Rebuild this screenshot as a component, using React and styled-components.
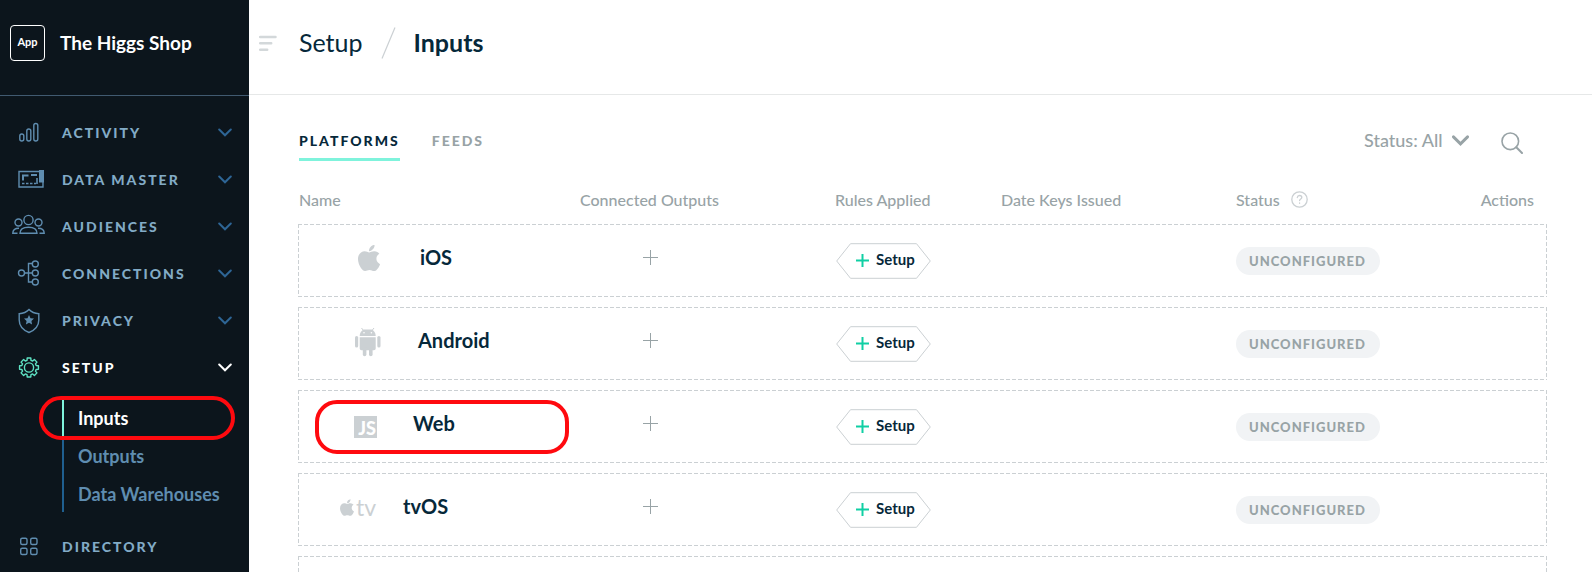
import React from "react";
import styled, { createGlobalStyle, css } from "styled-components";
import { FaApple } from "react-icons/fa";

const c = {
  ink: "#0c151c",
  navy: "#06283a",
  steel: "#82abc6",
  steelDim: "#5f8db0",
  blue: "#2e6595",
  line: "#1f5f8f",
  mint: "#7ff3dc",
  teal: "#10cfa4",
  grey: "#98a3a6",
  silver: "#cbd0d3",
  pale: "#f1f3f5",
  red: "#ff0a0f",
};

const GlobalStyle = createGlobalStyle`
  *, *::before, *::after { box-sizing: border-box; }
  body { margin: 0; font-family: Lato, "Liberation Sans", sans-serif; color: ${c.navy}; background: #fff; }
  button, select { font: inherit; color: inherit; background: none; border: 0; padding: 0; margin: 0; cursor: pointer; }
  a { color: inherit; text-decoration: none; }
  ul { list-style: none; margin: 0; padding: 0; }
  h1 { margin: 0; }
  svg { display: block; flex: none; }
`;

const Shell = styled.div`
  display: flex;
  height: 100vh;
  overflow: hidden;
`;

/* ---------- sidebar ---------- */

const Sidebar = styled.aside`
  flex: none;
  width: 249px;
  background: ${c.ink};
`;

const Workspace = styled.div`
  display: flex;
  align-items: center;
  gap: 15px;
  height: 96px;
  padding: 0 10px 10px;
  border-bottom: 1px solid #415a70;
  color: #fff;
  font-size: 19px;
  font-weight: 700;
  white-space: nowrap;
`;

const AppBadge = styled.span`
  display: flex;
  align-items: center;
  justify-content: center;
  width: 35px;
  height: 36px;
  padding-bottom: 2px;
  border: 1px solid #fff;
  border-radius: 4px;
  font-size: 11px;
`;

const Nav = styled.nav`
  padding-top: 13px;
`;

const NavButton = styled.button`
  display: flex;
  align-items: center;
  gap: 16px;
  width: 100%;
  height: 47px;
  padding: 0 17px 0 12px;
  color: ${(p) => (p.$active ? "#fff" : c.steel)};
  font-size: 14px;
  font-weight: 900;
  letter-spacing: 2px;
  text-transform: uppercase;
  text-align: left;

  > span { flex: 1; padding-bottom: 1px; }
  > svg:first-child { color: ${(p) => (p.$active ? "#5fe3c4" : c.steelDim)}; }
  > svg:last-child { color: ${(p) => (p.$active ? "#fff" : c.blue)}; }
`;

const SubMenu = styled.ul`
  display: flex;
  flex-direction: column;
  gap: 2px;
  margin: 9px 0 11px 62px;
  border-left: 2px solid ${c.line};
`;

const SubItem = styled.li`
  position: relative;
  margin-left: -2px;
  border-left: 2px solid ${(p) => (p.$active ? c.mint : "transparent")};
`;

const SubLink = styled.a`
  display: block;
  padding-left: 14px;
  line-height: 36px;
  font-size: 18px;
  font-weight: 700;
  white-space: nowrap;
  color: ${(p) => (p.$active ? "#fff" : c.steelDim)};
`;

const Callout = styled.span`
  position: absolute;
  border: 4px solid ${c.red};
  pointer-events: none;
  ${(p) =>
    p.$kind === "menu"
      ? css`inset: -4px 14px -4px -25px; border-radius: 22px;`
      : css`top: 10px; left: 17px; width: 254px; height: 54px; border-radius: 22px;`}
`;

/* ---------- main ---------- */

const Main = styled.main`
  flex: 1;
  min-width: 0;
`;

const TopBar = styled.header`
  display: flex;
  align-items: center;
  height: 95px;
  padding: 0 10px 8px;
  border-bottom: 1px solid #e6e8e8;
`;

const Crumbs = styled.div`
  display: flex;
  align-items: center;
  gap: 18px;
  margin-left: 22px;
  font-size: 25px;
  line-height: 32px;

  > :not(svg) { padding-bottom: 2px; }
`;

const PageTitle = styled.h1`
  font-size: 25px;
  font-weight: 700;
`;

const Content = styled.div`
  padding: 0 45px 0 49px;
`;

const Toolbar = styled.div`
  display: flex;
  align-items: flex-end;
  justify-content: space-between;
  height: 66px;
  padding: 0 24px 0 1px;
`;

const Tabs = styled.div`
  display: flex;
  gap: 32px;
`;

const Tab = styled.button`
  height: 38px;
  border-bottom: 3px solid ${(p) => (p.$active ? c.mint : "transparent")};
  color: ${(p) => (p.$active ? c.navy : c.grey)};
  font-size: 14px;
  font-weight: 900;
  letter-spacing: 2px;
`;

const Filters = styled.div`
  display: flex;
  align-items: center;
  gap: 32px;
  height: 40px;
  color: ${c.grey};
`;

const StatusPicker = styled.label`
  display: flex;
  align-items: center;
  gap: 9px;
  padding-bottom: 2px;

  select {
    appearance: none;
    outline: none;
    width: 79px;
    height: 32px;
    font-size: 18px;
    font-weight: 500;
    color: ${c.grey};
  }
`;

const SearchButton = styled.button`
  padding-top: 4px;
`;

const Table = styled.table`
  display: block;
  margin-top: 17px;
`;

const THead = styled.thead`
  display: block;
`;

const TBody = styled.tbody`
  display: grid;
  gap: 10px;
`;

const columns = css`
  display: grid;
  grid-template-columns:
    minmax(0, 281fr) minmax(0, 255fr) minmax(0, 166fr)
    minmax(0, 235fr) minmax(0, 236fr) minmax(0, 76fr);
  align-items: center;
`;

const HeadRow = styled.tr`
  ${columns}
  height: 46px;
  padding-bottom: 3px;
`;

const Th = styled.th`
  display: flex;
  align-items: center;
  justify-content: ${(p) => (p.$end ? "flex-end" : "flex-start")};
  gap: 11px;
  padding: 0 ${(p) => (p.$end ? "13px" : "0")} 0 1px;
  color: ${c.grey};
  font-size: 16px;
  font-weight: 500;
  white-space: nowrap;
`;

const dashX = `linear-gradient(90deg, ${c.silver} 4px, transparent 4px)`;
const dashY = `linear-gradient(180deg, ${c.silver} 4px, transparent 4px)`;

const Row = styled.tr`
  ${columns}
  position: relative;
  height: 73px;
  background:
    ${dashX} top left / 6px 1px repeat-x,
    ${dashX} bottom left / 6px 1px repeat-x,
    ${dashY} top left / 1px 6px repeat-y,
    ${dashY} top right / 1px 6px repeat-y;
`;

const Td = styled.td`
  padding: 0 0 0 1px;
`;

const NameTd = styled.td`
  display: flex;
  align-items: center;
  gap: 25px;
  padding: 0 0 0 42px;
`;

const Name = styled.span`
  padding-bottom: 7px;
  font-size: 20px;
  line-height: 24px;
  font-weight: 700;
`;

const AddButton = styled.button`
  display: block;
  margin: 0 0 6px 63px;
  color: ${c.grey};
`;

const HexButton = styled.button`
  position: relative;
  display: flex;
  align-items: center;
  gap: 7px;
  width: 95px;
  height: 36px;
  margin-left: 1px;
  padding: 0 0 0 20px;
  font-size: 15px;
  font-weight: 700;

  > span { padding-bottom: 3px; }
`;

const HexOutline = styled.svg`
  position: absolute;
  inset: 0;
`;

const Badge = styled.span`
  display: inline-block;
  padding: 0 14px 0 13px;
  border-radius: 14px;
  background: ${c.pale};
  color: ${c.grey};
  font-size: 13px;
  line-height: 28px;
  font-weight: 900;
  letter-spacing: 1px;
`;

/* ---------- drawings ---------- */

const NavSvg = ({ children }) => (
  <svg width="34" height="28" viewBox="0 0 34 28" fill="none" stroke="currentColor" strokeWidth="1.4" aria-hidden="true">
    {children}
  </svg>
);

const gearPath = (() => {
  const pts = [];
  for (let i = 0; i < 8; i++) {
    const a = (i * Math.PI) / 4 - Math.PI / 2;
    [[-0.27, 7.4], [-0.19, 9.6], [0.19, 9.6], [0.27, 7.4]].forEach(([d, r]) => {
      pts.push(`${(17 + r * Math.cos(a + d)).toFixed(2)} ${(13.5 + r * Math.sin(a + d)).toFixed(2)}`);
    });
  }
  return `M${pts.join("L")}Z`;
})();

const icons = {
  activity: (
    <NavSvg>
      <rect x="7.8" y="15" width="4" height="7" rx="2" />
      <rect x="14.8" y="10" width="4" height="12" rx="2" />
      <rect x="21.8" y="4.5" width="4" height="17.5" rx="2" />
    </NavSvg>
  ),
  data: (
    <NavSvg>
      <path d="M27 5.500H7V21H31V16" />
      <path d="M27 4h5v12.500h-5z" fill="currentColor" stroke="none" />
      <path d="M11 14.500V9.500h5.500M19 9h6" strokeWidth="2" />
      <path d="M10 17.500h14" strokeDasharray="2.500 1.500" strokeWidth="1.600" />
      <path d="M25 12v6" strokeWidth="1.600" />
    </NavSvg>
  ),
  audiences: (
    <NavSvg>
      <circle cx="16.500" cy="7" r="4.600" />
      <circle cx="6.500" cy="9.500" r="3.500" />
      <circle cx="26.500" cy="9.500" r="3.500" />
      <path d="M8 20.300c0-4 3.500-6 8.500-6s8.500 2 8.500 6z" />
      <path d="M5.500 20.300H.8c0-3.300 2-5 6.200-5M27.500 20.300h4.700c0-3.300-2-5-6.200-5" />
    </NavSvg>
  ),
  connections: (
    <NavSvg>
      <circle cx="9.500" cy="13" r="3" />
      <circle cx="23.300" cy="4" r="3" />
      <circle cx="23.300" cy="13" r="3" />
      <circle cx="23.300" cy="22" r="3" />
      <path d="M12.500 13h7.800M20.300 3.500h-3.800v18.500h3.800" />
    </NavSvg>
  ),
  privacy: (
    <NavSvg>
      <path d="M17 2.500c2.500 2.700 6 4 9.800 4.200V13c0 6-4.300 10.300-9.800 12.500C11.500 23.300 7.200 19 7.200 13V6.700C11 6.500 14.500 5.200 17 2.500z" />
      <path d="M17 8l1.500 3.200 3.500.4-2.600 2.400.7 3.500-3.100-1.700-3.100 1.700.7-3.500L12 11.600l3.500-.4z" fill="currentColor" stroke="none" />
    </NavSvg>
  ),
  setup: (
    <NavSvg>
      <path d={gearPath} strokeLinejoin="round" />
      <circle cx="17" cy="13.500" r="4.600" />
    </NavSvg>
  ),
  directory: (
    <NavSvg>
      <rect x="8.700" y="5.200" width="6.300" height="6.300" rx="1.500" />
      <rect x="18.700" y="5.200" width="6.300" height="6.300" rx="1.500" />
      <rect x="8.700" y="15.200" width="6.300" height="6.300" rx="1.500" />
      <rect x="18.700" y="15.200" width="6.300" height="6.300" rx="1.500" />
    </NavSvg>
  ),
};

const Chevron = ({ width = 14, height = 9, weight = 2 }) => (
  <svg width={width} height={height} viewBox="0 0 14 9" fill="none" stroke="currentColor" strokeWidth={weight} strokeLinecap="round" aria-hidden="true">
    <path d="M1.200 1.500 7 7.300l5.800-5.800" />
  </svg>
);

const PlusIcon = ({ size, weight, color = "currentColor" }) => (
  <svg width={size} height={size} viewBox={`0 0 ${size} ${size}`} stroke={color} strokeWidth={weight} aria-hidden="true">
    <path d={`M${size / 2} 0V${size}M0 ${size / 2}H${size}`} />
  </svg>
);

const PlatformSvg = ({ width, children }) => (
  <svg width={width} height="32" viewBox={`0 0 ${width} 32`} fill={c.silver} aria-hidden="true">
    {children}
  </svg>
);

const AppleLogo = (
  <PlatformSvg width={55}>
    <FaApple x="14" y="-2" size={30} color={c.silver} />
  </PlatformSvg>
);

const AndroidLogo = (
  <PlatformSvg width={53}>
    <rect x="15" y="8" width="3.200" height="11.500" rx="1.600" />
    <rect x="37.300" y="8" width="3.200" height="11.500" rx="1.600" />
    <path d="M19.700 9.300h16v11.200a1.800 1.800 0 0 1-1.800 1.800H21.500a1.800 1.800 0 0 1-1.800-1.800z" />
    <rect x="22.800" y="19" width="3.600" height="9.300" rx="1.800" />
    <rect x="29" y="19" width="3.600" height="9.300" rx="1.800" />
    <path d="M19.700 7.900c0-3.100 1.700-5.300 4-6.500h8c2.300 1.200 4 3.400 4 6.500z" />
    <path d="M21.500 0l2 2.500M34 0l-2 2.500" stroke={c.silver} strokeLinecap="round" />
    <circle cx="24" cy="4.800" r=".8" fill="#fff" />
    <circle cx="31.400" cy="4.800" r=".8" fill="#fff" />
  </PlatformSvg>
);

const JsLogo = (
  <PlatformSvg width={48}>
    <rect x="14" y="5" width="23" height="22" />
    <text x="36" y="24" textAnchor="end" fill="#fff" fontFamily="Lato, sans-serif" fontSize="18" fontWeight="900">JS</text>
  </PlatformSvg>
);

const TvLogo = (
  <PlatformSvg width={38}>
    <FaApple x="-2.5" y="4" size={19} color={c.silver} />
    <text x="16" y="22" fontFamily="Lato, sans-serif" fontSize="23" fontWeight="400">tv</text>
  </PlatformSvg>
);

/* ---------- data ---------- */

const navItems = [
  { id: "activity", label: "Activity" },
  { id: "data", label: "Data Master" },
  { id: "audiences", label: "Audiences" },
  { id: "connections", label: "Connections" },
  { id: "privacy", label: "Privacy" },
  { id: "setup", label: "Setup", children: ["Inputs", "Outputs", "Data Warehouses"] },
  { id: "directory", label: "Directory", leaf: true },
];

const platforms = [
  { name: "iOS", logo: AppleLogo },
  { name: "Android", logo: AndroidLogo },
  { name: "Web", logo: JsLogo, highlighted: true },
  { name: "tvOS", logo: TvLogo },
];

function NavSection({ item }) {
  return (
    <>
      <NavButton type="button" $active={!!item.children}>
        {icons[item.id]}
        <span>{item.label}</span>
        {!item.leaf && <Chevron />}
      </NavButton>
      {item.children && (
        <SubMenu>
          {item.children.map((label, i) => (
            <SubItem key={label} $active={i === 0}>
              <SubLink href="#" $active={i === 0}>{label}</SubLink>
              {i === 0 && <Callout $kind="menu" />}
            </SubItem>
          ))}
        </SubMenu>
      )}
    </>
  );
}

function PlatformRow({ platform }) {
  return (
    <Row>
      <NameTd>
        {platform.logo}
        <Name>{platform.name}</Name>
        {platform.highlighted && <Callout $kind="row" />}
      </NameTd>
      <Td>
        <AddButton type="button" aria-label={`Connect output to ${platform.name}`}>
          <PlusIcon size={15} weight={1} />
        </AddButton>
      </Td>
      <Td>
        <HexButton type="button">
          <HexOutline width="95" height="36" viewBox="0 0 95 36" fill="none" stroke={c.silver} aria-hidden="true">
            <path d="M.7 18 14.500.7h66L94.300 18 80.500 35.300h-66z" />
          </HexOutline>
          <PlusIcon size={13} weight={2} color={c.teal} />
          <span>Setup</span>
        </HexButton>
      </Td>
      <Td />
      <Td><Badge>UNCONFIGURED</Badge></Td>
      <Td />
    </Row>
  );
}

export default function App() {
  return (
    <>
      <GlobalStyle />
      <Shell>
        <Sidebar>
          <Workspace>
            <AppBadge>App</AppBadge>
            The Higgs Shop
          </Workspace>
          <Nav>
            {navItems.map((item) => <NavSection key={item.id} item={item} />)}
          </Nav>
        </Sidebar>
        <Main>
          <TopBar>
            <button type="button" aria-label="Toggle menu">
              <svg width="18" height="17" viewBox="0 0 18 17" stroke="#d3d8da" strokeWidth="2.500" strokeLinecap="round" aria-hidden="true">
                <path d="M1.200 2h15.300M1.200 8.300h11M1.200 14.700h7" />
              </svg>
            </button>
            <Crumbs>
              <a href="#">Setup</a>
              <svg width="15" height="32" viewBox="0 0 15 32" stroke={c.silver} strokeWidth="1.200" aria-hidden="true">
                <path d="M1 31.500 14 .5" />
              </svg>
              <PageTitle>Inputs</PageTitle>
            </Crumbs>
          </TopBar>
          <Content>
            <Toolbar>
              <Tabs>
                <Tab type="button" $active>PLATFORMS</Tab>
                <Tab type="button">FEEDS</Tab>
              </Tabs>
              <Filters>
                <StatusPicker>
                  <select aria-label="Status filter" defaultValue="all">
                    <option value="all">Status: All</option>
                  </select>
                  <Chevron width={17} height={11} weight={2.4} />
                </StatusPicker>
                <SearchButton type="button" aria-label="Search">
                  <svg width="22" height="22" viewBox="0 0 22 22" fill="none" stroke="currentColor" strokeWidth="1.600" strokeLinecap="round" aria-hidden="true">
                    <circle cx="9.300" cy="9.300" r="8.300" />
                    <path d="M15.300 15.300 21 21" strokeWidth="2" />
                  </svg>
                </SearchButton>
              </Filters>
            </Toolbar>
            <Table>
              <THead>
                <HeadRow>
                  <Th>Name</Th>
                  <Th>Connected Outputs</Th>
                  <Th>Rules Applied</Th>
                  <Th>Date Keys Issued</Th>
                  <Th>
                    Status
                    <svg width="17" height="17" viewBox="0 0 17 17" fill="none" stroke={c.silver} strokeWidth="1.300" strokeLinecap="round" aria-hidden="true">
                      <circle cx="8.500" cy="8.500" r="7.700" />
                      <path d="M6.300 6.500c.2-1.300 1.100-2 2.300-2s2.200.8 2.200 1.900c0 1.500-2.200 1.600-2.200 3.200M8.600 11.900v.4" />
                    </svg>
                  </Th>
                  <Th $end>Actions</Th>
                </HeadRow>
              </THead>
              <TBody>
                {platforms.map((p) => <PlatformRow key={p.name} platform={p} />)}
                <Row><Td /></Row>
              </TBody>
            </Table>
          </Content>
        </Main>
      </Shell>
    </>
  );
}
